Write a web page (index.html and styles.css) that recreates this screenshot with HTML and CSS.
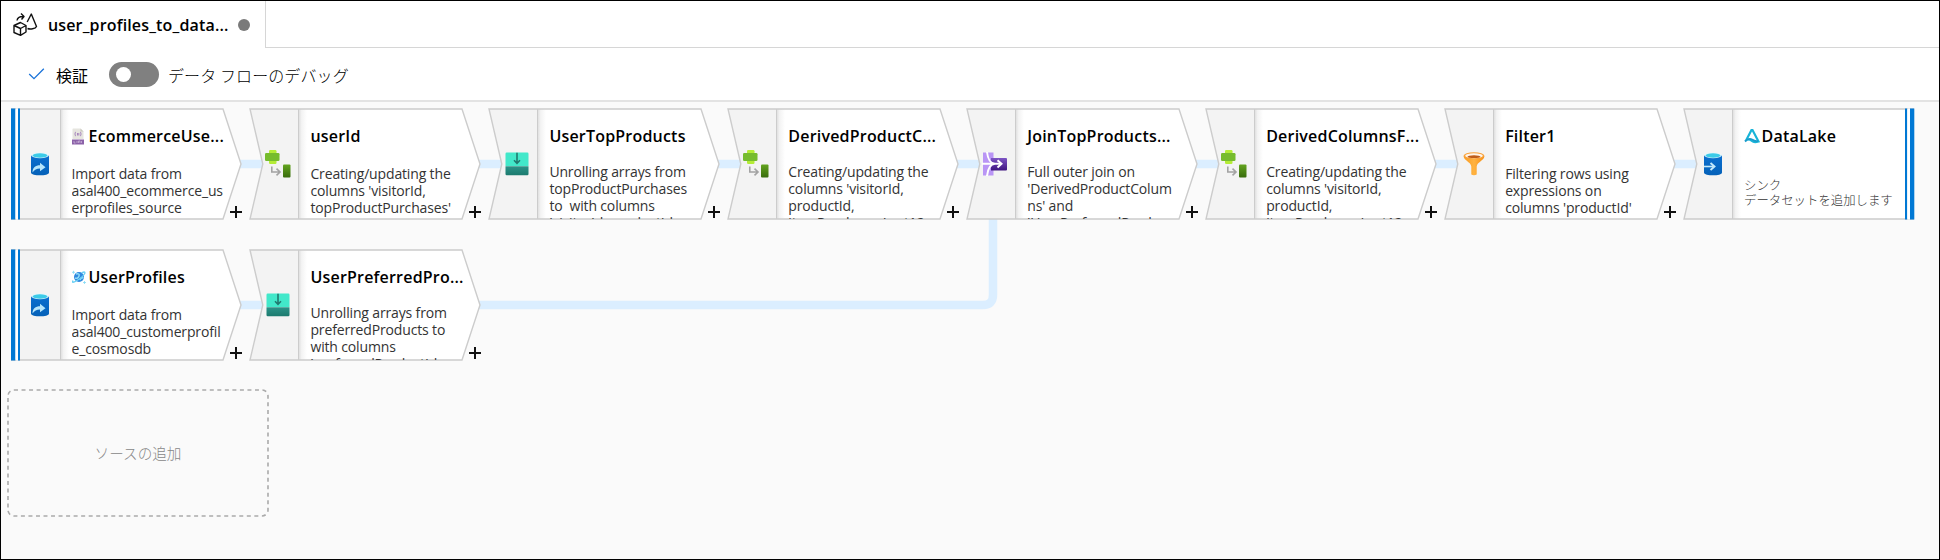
FILE: index.html
```html
<!DOCTYPE html>
<html lang="ja">
<head>
<meta charset="utf-8">
<title>user_profiles_to_datalake</title>
<link rel="stylesheet" href="styles.css">
</head>
<body>
<svg class="defs" width="0" height="0">
  <defs>
    <linearGradient id="shade" x1="0" x2="1" y1="0" y2="0"><stop offset="0" stop-color="#d9d9d9"/><stop offset=".4" stop-color="#f3f3f3"/><stop offset="1" stop-color="#fff"/></linearGradient>
    <linearGradient id="blue" x1="0" x2="0" y1="0" y2="1"><stop offset="0" stop-color="#0a6fd0"/><stop offset="1" stop-color="#0561b8"/></linearGradient>
    <linearGradient id="green" x1="0" x2="0" y1="0" y2="1"><stop offset="0" stop-color="#63a41f"/><stop offset="1" stop-color="#386b0c"/></linearGradient>
    <linearGradient id="teal" x1="0" x2="0" y1="0" y2="1"><stop offset="0" stop-color="#2b9388"/><stop offset="1" stop-color="#1c7a6e"/></linearGradient>
    <linearGradient id="purple" x1="0" x2="0" y1="0" y2="1"><stop offset="0" stop-color="#7d54c4"/><stop offset="1" stop-color="#3f1580"/></linearGradient>
    <linearGradient id="orange" x1="0" x2="1" y1="0" y2="0"><stop offset="0" stop-color="#f99a22"/><stop offset=".5" stop-color="#ffb340"/><stop offset="1" stop-color="#f68f16"/></linearGradient>
    <symbol id="shape-mid" viewBox="0 0 232 112">
      <path d="M1 1H213L231 56 213 111H1L13.800 56Z" fill="#fff"/>
      <path d="M1 1H49V111H1L13.800 56Z" fill="#f3f3f3"/>
      <rect x="49" y="1" width="9" height="110" fill="url(#shade)"/>
      <path d="M49.500 1V111" stroke="#ccc"/>
      <path d="M1 1H213L231 56 213 111H1L13.800 56Z" fill="none" stroke="#ccc" stroke-width="1.400"/>
    </symbol>
    <symbol id="shape-start" viewBox="0 0 232 112">
      <path d="M1 1H213L231 56 213 111H1Z" fill="#fff"/>
      <path d="M10 1H50V111H10Z" fill="#f3f3f3"/>
      <rect x="50" y="1" width="9" height="110" fill="url(#shade)"/>
      <path d="M50.500 1V111" stroke="#ccc"/>
      <path d="M1 1H213L231 56 213 111H1" fill="none" stroke="#ccc" stroke-width="1.400"/>
      <path d="M1 .5H5.500V111.500H1ZM8 .5H10V111.500H8Z" fill="#0078d4"/>
      <path d="M5.500 .5H8V111.500H5.500Z" fill="#fff"/>
    </symbol>
    <symbol id="shape-end" viewBox="0 0 232 112">
      <path d="M1 1H231V111H1L13.800 56Z" fill="#fff"/>
      <path d="M1 1H49V111H1L13.800 56Z" fill="#f3f3f3"/>
      <rect x="49" y="1" width="9" height="110" fill="url(#shade)"/>
      <path d="M49.500 1V111" stroke="#ccc"/>
      <path d="M231 1H1L13.800 56 1 111H231" fill="none" stroke="#ccc" stroke-width="1.400"/>
      <path d="M222 .5H224.300V111.500H222ZM227 .5H231.300V111.500H227Z" fill="#0078d4"/>
      <path d="M224.300 .5H227V111.500H224.300Z" fill="#fff"/>
    </symbol>
    <symbol id="i-source" viewBox="0 0 20 24">
      <path d="M1 3V20.500C1 24.300 19 24.300 19 20.500V3Z" fill="url(#blue)"/>
      <ellipse cx="10" cy="3.300" rx="9" ry="2.900" fill="#e6f6fb"/><ellipse cx="10" cy="3.500" rx="7.500" ry="2.200" fill="#3ccbe8"/>
      <path d="M2.500 20.500C2.500 15.500 5.500 13.200 10 13.200V10.800L15.500 15.200 10 19.200V16.600C6.500 16.600 4.500 18 2.500 20.500Z" fill="#b5e5fb"/>
    </symbol>
    <symbol id="i-sink" viewBox="0 0 20 24">
      <path d="M1 3V20.500C1 24.300 19 24.300 19 20.500V3Z" fill="url(#blue)"/>
      <ellipse cx="10" cy="3.300" rx="9" ry="2.900" fill="#e6f6fb"/><ellipse cx="10" cy="3.500" rx="7.500" ry="2.200" fill="#3ccbe8"/>
      <path d="M1 14.500H10.500" fill="none" stroke="#c3e9fb" stroke-width="1.600"/><path d="M7.500 11L11.500 14.500 7.500 18" fill="none" stroke="#c3e9fb" stroke-width="1.900"/>
    </symbol>
    <symbol id="i-derive" viewBox="0 0 26 28">
      <rect x="4" y="0" width="7.500" height="14" rx="1.200" fill="#b4ec36"/>
      <rect x="0" y="3" width="14.500" height="8" rx="1.200" fill="#76bc2d"/>
      <path d="M6.800 16.500V22H15M11.500 18.700L15 22 11.500 25.300" fill="none" stroke="#a3a3a3" stroke-width="1.600"/>
      <rect x="18" y="14.500" width="7.500" height="13" rx="1" fill="url(#green)"/>
    </symbol>
    <symbol id="i-flatten" viewBox="0 0 24 24">
      <path d="M1.700 .5H22.300Q23.500 .5 23.500 1.700V14H.5V1.700Q.5 .5 1.700 .5Z" fill="#42e8ca"/>
      <path d="M.5 14.300H23.500V22Q23.500 23.300 22.300 23.300H1.700Q.5 23.300 .5 22Z" fill="url(#teal)"/>
      <path d="M12 .8V11M9 8.300L12 11.300 15 8.300" fill="none" stroke="#21796f" stroke-width="1.600"/>
    </symbol>
    <symbol id="i-join" viewBox="0 0 26 24">
      <path d="M1 .5H11.500V23.500H1Z" fill="#b995f5"/>
      <path d="M9 6H24Q25 6 25 7V17.500Q25 18.500 24 18.500H9Z" fill="url(#purple)"/>
      <path d="M5 0C6 8 8 11.500 13 11.800 8 12 6 16 5 24M0 11.800H18" fill="none" stroke="#fff" stroke-width="2"/>
      <path d="M15.500 8.200L19.500 11.800 15.500 15.400" fill="none" stroke="#fff" stroke-width="2"/>
    </symbol>
    <symbol id="i-filter" viewBox="0 0 22 24">
      <path d="M.6 4C.6 8.500 8 10 8.300 14.500V22.500Q11 24 13.700 22.500V14.500C14 10 21.400 8.500 21.400 4Z" fill="url(#orange)"/>
      <ellipse cx="11" cy="3.800" rx="10.400" ry="3.500" fill="#f9a23a"/><ellipse cx="11" cy="3.700" rx="8.800" ry="2.500" fill="#fff4e8"/><ellipse cx="11" cy="4.700" rx="6.500" ry="1.400" fill="#bf5c18"/>
    </symbol>
  </defs>
</svg>
<div class="app">
  <header class="tabs">
    <div class="tab">
      <svg class="tab-icon" viewBox="0 0 24 24" fill="none" stroke="#111" stroke-width="1.400" stroke-linejoin="round">
        <path d="M7.500 9.500L13 12.500V19L7.500 22.300 1 19.500V12.500ZM1 12.500L7.500 15.500 13 12.500M7.500 15.500V22.300M4 7.500C4.500 4.500 6.500 3.300 10.500 3.500M8 .5L11 3.500 8.500 6.500M14.200 9L18.300 1 23.500 13.500C22.500 16 17 16.500 14.500 15.500"/>
      </svg>
      <span class="tab-title">user_profiles_to_data...</span><i class="dirty"></i>
    </div>
    <div class="tab-rest"></div>
  </header>
  <div class="toolbar">
    <svg class="check" viewBox="0 0 16 12"><path d="M.7 6L5.500 10.700 15.300 .8" fill="none" stroke="#1a73d9" stroke-width="1.300"/></svg>
    <span class="validate">検証</span>
    <span class="switch"><i></i></span>
    <span class="debug">データ フローのデバッグ</span>
  </div>
  <main class="canvas">
    <svg class="links" width="1938" height="456"><path d="M230 62H1700M230 203H982Q992 203 992 193V110" fill="none" stroke="#dbeeff" stroke-width="8.500"/></svg>
    <div class="flow">
      <article class="node"><svg class="shape"><use href="#shape-start"/></svg><svg class="icon source"><use href="#i-source"/></svg>
        <h2><svg class="json" viewBox="0 0 12 17"><path d="M1 .5H8.500L11.500 3.500V11H.5V1Z" fill="#e6e5df"/><path d="M8.500 .5V3.500H11.500Z" fill="#c9c8bf"/><rect y="11.500" width="12" height="5" fill="#8b62a8"/><path d="M4 4Q3 4 3 6 3 8 4 8M8 4Q9 4 9 6 9 8 8 8M5.500 5V7.500M6.800 5V7.500" fill="none" stroke="#a07ab9" stroke-width=".9"/><path d="M2 13V15H3.500M5 13V15M6.500 15V13H8V15M9.500 15V13" fill="none" stroke="#d3bde0" stroke-width=".7"/></svg><span>EcommerceUse...</span></h2>
        <p>Import data from<br>asal400_ecommerce_us<br>erprofiles_source</p><b class="add"></b></article>
      <article class="node"><svg class="shape"><use href="#shape-mid"/></svg><svg class="icon derive"><use href="#i-derive"/></svg>
        <h2>userId</h2><p>Creating/updating the<br>columns 'visitorId,<br>topProductPurchases'</p><b class="add"></b></article>
      <article class="node"><svg class="shape"><use href="#shape-mid"/></svg><svg class="icon flatten"><use href="#i-flatten"/></svg>
        <h2>UserTopProducts</h2><p class="long">Unrolling arrays from<br>topProductPurchases<br>to&nbsp; with columns<br>'visitorId, productId,</p><b class="add"></b></article>
      <article class="node"><svg class="shape"><use href="#shape-mid"/></svg><svg class="icon derive"><use href="#i-derive"/></svg>
        <h2>DerivedProductC...</h2><p class="long">Creating/updating the<br>columns 'visitorId,<br>productId,<br>itemPurchasesLast12</p><b class="add"></b></article>
      <article class="node"><svg class="shape"><use href="#shape-mid"/></svg><svg class="icon join"><use href="#i-join"/></svg>
        <h2>JoinTopProducts...</h2><p class="long">Full outer join on<br>'DerivedProductColum<br>ns' and<br>'UserPreferredProduc</p><b class="add"></b></article>
      <article class="node"><svg class="shape"><use href="#shape-mid"/></svg><svg class="icon derive"><use href="#i-derive"/></svg>
        <h2>DerivedColumnsF...</h2><p class="long">Creating/updating the<br>columns 'visitorId,<br>productId,<br>itemPurchasesLast12</p><b class="add"></b></article>
      <article class="node"><svg class="shape"><use href="#shape-mid"/></svg><svg class="icon filter"><use href="#i-filter"/></svg>
        <h2>Filter1</h2><p>Filtering rows using<br>expressions on<br>columns 'productId'</p><b class="add"></b></article>
      <article class="node"><svg class="shape"><use href="#shape-end"/></svg><svg class="icon sink"><use href="#i-sink"/></svg>
        <h2><svg class="lake" viewBox="0 0 16 16"><path d="M7.500 2L2.500 11.500Q6 11 8 13T14.500 13.500L8.500 2Z" fill="none" stroke="#18b4d8" stroke-width="2.200"/><path d="M1 13.500Q5 9.500 8 11.500T14 13" fill="none" stroke="#1a9bcb" stroke-width="1.800"/></svg><span>DataLake</span></h2>
        <p class="jp">シンク<br>データセットを追加します</p></article>
    </div>
    <div class="flow second">
      <article class="node"><svg class="shape"><use href="#shape-start"/></svg><svg class="icon source"><use href="#i-source"/></svg>
        <h2><svg class="cosmos" viewBox="0 0 14 15"><circle cx="7" cy="7" r="5" fill="#2f88df"/><path d="M4 4Q8 3 7 6T3 8M8 10Q9 7 11.500 8" fill="none" stroke="#8edcf7" stroke-width="1.500"/><path d="M1 10.500Q-1 14 5 10.500T13 3Q13 1 9.500 3" fill="none" stroke="#67cff4" stroke-width="1.300"/><path d="M1.500 .8V3.800M0 2.300H3M12.500 11V14M11 12.500H14" stroke="#83d9f4" stroke-width=".8"/></svg><span>UserProfiles</span></h2>
        <p>Import data from<br>asal400_customerprofil<br>e_cosmosdb</p><b class="add"></b></article>
      <article class="node"><svg class="shape"><use href="#shape-mid"/></svg><svg class="icon flatten"><use href="#i-flatten"/></svg>
        <h2>UserPreferredPro...</h2><p class="long">Unrolling arrays from<br>preferredProducts to<br>with columns<br>'preferredProductId,</p><b class="add"></b></article>
    </div>
    <div class="add-source"><svg class="dash" viewBox="0 0 262 128"><rect x="1" y="1" width="260" height="126" rx="6" fill="none" stroke="#aaa" stroke-width="1.600" stroke-dasharray="4 3.530"/></svg><span>ソースの追加</span></div>
  </main>
</div>
</body>
</html>
```

FILE: styles.css
```css
* { box-sizing: border-box; }
body { margin: 0; font-family: "Open Sans", "Noto Sans CJK JP", sans-serif; color: #000; }
svg { display: block; flex: none; }
.defs { position: absolute; }
.app { width: 1940px; height: 560px; border: 1px solid #000; display: flex; flex-direction: column; background: #fff; overflow: hidden; }
.tabs { display: flex; height: 47px; }
.tab { width: 265px; display: flex; align-items: center; padding: 0 0 0 11px; border-right: 1px solid #d6d6d6; }
.tab-icon { width: 26px; height: 24px; }
.tab-title { margin-left: 10px; font-size: 16px; font-weight: 600; width: 182px; white-space: nowrap; letter-spacing: .15px; }
.dirty { width: 12px; height: 12px; border-radius: 50%; background: #7a7a7a; margin-left: 8px; }
.tab-rest { flex: 1; border-bottom: 1px solid #d6d6d6; }
.toolbar { height: 54px; display: flex; align-items: center; padding-left: 27px; border-bottom: 2px solid #e3e3e3; font-family: "Noto Sans CJK JP", sans-serif; font-weight: 300; font-size: 16px; white-space: nowrap; }
.check { width: 17px; height: 12px; }
.validate { margin-left: 11px; width: 53px; padding-top: 2px; font-weight: 400; }
.switch { width: 50px; height: 25px; border-radius: 13px; background: #808080; padding: 5px 7px; }
.switch i { display: block; width: 15px; height: 15px; border-radius: 50%; background: #fff; }
.debug { margin-left: 9px; padding-top: 2px; letter-spacing: .1px; }
.canvas { position: relative; flex: 1; background: #fafafa; padding: 7px 0 0 10px; }
.links { position: absolute; left: 0; top: 0; }
.flow { display: flex; gap: 8.950px; height: 110px; }
.second { margin-top: 31px; }
.node { position: relative; width: 230px; height: 110px; flex: none; padding: 14px 0 0 60.500px; }
.shape { position: absolute; left: -1px; top: -1px; width: 232px; height: 112px; }
.icon { position: absolute; left: 16.500px; top: 43px; width: 24px; height: 24px; }
.source, .sink { left: 19px; top: 43px; width: 20px; }
.derive { left: 15.500px; top: 41px; width: 26px; height: 28px; }
.join { width: 26px; left: 15.500px; }
.filter { width: 22px; left: 18px; }
.node h2 { position: relative; margin: 0; height: 26px; line-height: 26px; font-size: 16px; font-weight: 600; display: flex; align-items: center; white-space: nowrap; letter-spacing: .2px; }
.json { width: 12px; height: 17px; margin-right: 5px; }
.cosmos { width: 14px; height: 15px; margin-right: 3px; }
.lake { width: 16px; height: 16px; margin-right: 1.500px; }
.node p { position: relative; margin: 16px 0 0; height: 53px; overflow: hidden; font-size: 14px; line-height: 17px; color: #333; white-space: nowrap; letter-spacing: -.15px; }
.node .long { margin-top: 14px; height: 55.500px; }
.node .jp { margin-top: 29px; height: 40px; font: 300 12.400px/15px "Noto Sans CJK JP", sans-serif; letter-spacing: 0; }
.add { position: absolute; left: 219px; top: 97px; width: 12px; height: 12px; background: linear-gradient(#111, #111) center / 12px 2px no-repeat, linear-gradient(#111, #111) center / 2px 12px no-repeat; }
.add-source { position: relative; width: 262px; height: 128px; margin: 28.500px 0 0 -4px; display: flex; align-items: center; justify-content: center; font: 300 14.600px/20px "Noto Sans CJK JP", sans-serif; color: #888; }
.dash { position: absolute; inset: 0; }
```
